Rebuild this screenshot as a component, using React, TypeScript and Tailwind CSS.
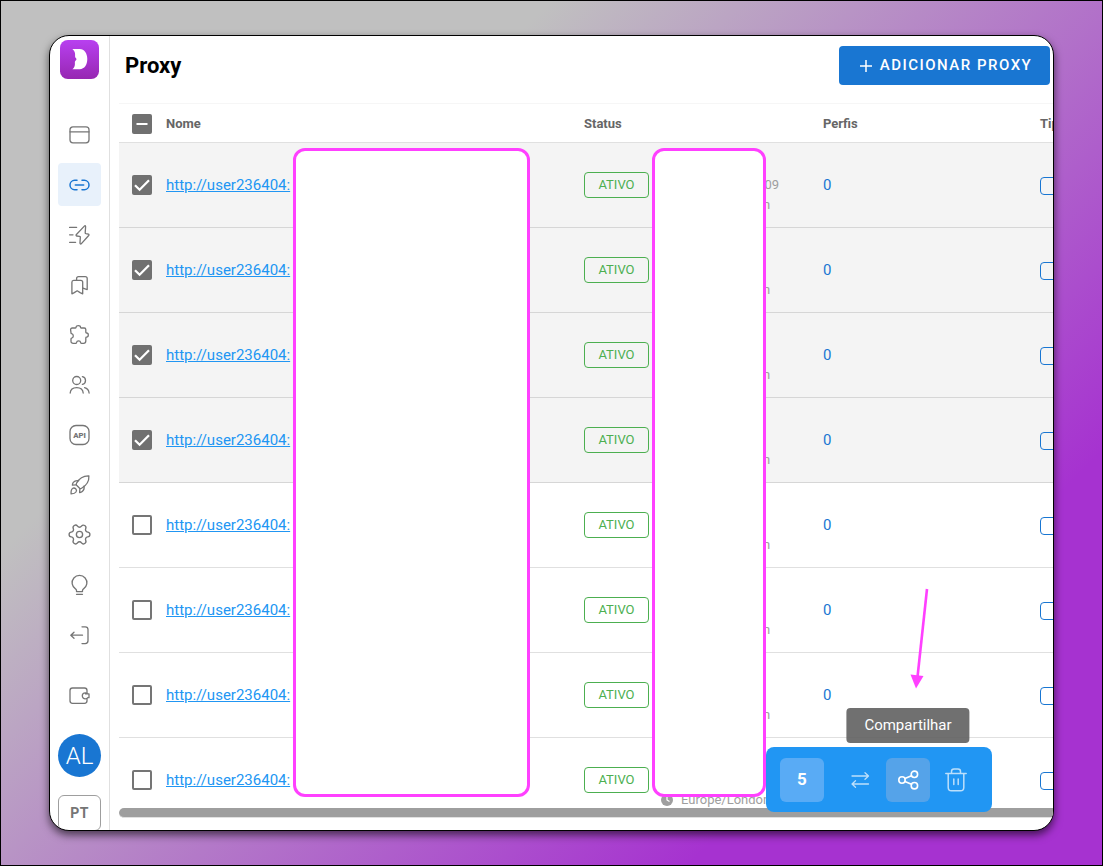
import type { ReactNode } from "react";
import { Settings } from "lucide-react";

function Icon({ children, className = "size-6" }: { children: ReactNode; className?: string }) {
  return (
    <svg
      viewBox="0 0 24 24"
      fill="none"
      stroke="currentColor"
      strokeWidth="1.3"
      strokeLinecap="round"
      strokeLinejoin="round"
      className={className}
      aria-hidden="true"
    >
      {children}
    </svg>
  );
}

const navItems: { label: string; icon: ReactNode; active?: boolean }[] = [
  {
    label: "Perfis",
    icon: (
      <Icon>
        <rect x="3" y="3.8" width="19" height="16" rx="3" />
        <path d="M3 8.8h19" />
      </Icon>
    ),
  },
  {
    label: "Proxy",
    active: true,
    icon: (
      <Icon>
        <path strokeWidth="1.5" d="M10 7.3H7.7a4.7 4.7 0 0 0 0 9.4H10M15 7.3h2.3a4.7 4.7 0 0 1 0 9.4H15M8.3 12h8.4" />
      </Icon>
    ),
  },
  {
    label: "Automação",
    icon: (
      <Icon>
        <path d="M2.6 4.4h7M2.6 11.8h3.4M2.6 19.3h6" />
        <path d="M17.6 2.9 9.4 11.5c-.6.7-.4 1.4.3 1.5l2.9.4c.5.1.8.5.7 1l-.3 5.6c0 1 .8 1.3 1.4.6l7.3-8.1c.5-.6.3-1.2-.4-1.4l-2.4-.4c-.5-.1-.8-.5-.7-1l.4-5.8c.1-1-.5-1.5-1-1Z" />
      </Icon>
    ),
  },
  {
    label: "Favoritos",
    icon: (
      <Icon>
        <path d="M6.6 7.4h7.2a1.9 1.9 0 0 1 1.9 1.9v11.5l-2.6-1.2-2.9-1.8-2.9 1.8-2.4 1.2V9.3c0-1 .7-1.9 1.7-1.9Z" />
        <path d="M9.6 7.2V5.6a2 2 0 0 1 2-2h6.6a2 2 0 0 1 2 2v11l-4.3-1.5" />
      </Icon>
    ),
  },
  {
    label: "Extensões",
    icon: (
      <Icon>
        <path d="M5.2 5h3.2c.4 0 .7-.3.7-.7 0-1 1-1.7 2.2-1.7s2.2.7 2.2 1.7c0 .4.3.7.7.7h3c.9 0 1.6.7 1.6 1.6v2.7c0 .5.4.7.8.7 1 0 1.7 1 1.7 2.1 0 1.2-.8 2.1-1.7 2.1-.5 0-.8.3-.8.7v3.2c0 1.5-.9 2.3-2.3 2.3h-2c-.5 0-.7-.3-.8-.8-.2-1-1-1.7-2.1-1.7s-1.9.7-2.1 1.7c-.1.5-.3.8-.8.8H6.2c-1.3 0-2.2-.8-2.2-2.2v-2.3c0-.4.2-.7.6-.8 1-.3 1.7-1.1 1.7-2.2S5.6 11 4.6 10.7C4.2 10.6 4 10.3 4 9.9L3.6 6.6C3.6 5.7 4.3 5 5.2 5Z" />
      </Icon>
    ),
  },
  {
    label: "Equipe",
    icon: (
      <Icon>
        <circle cx="9.7" cy="7.5" r="4" />
        <path d="M15.4 3.6a4 4 0 0 1 0 7.8M3.2 20c.2-3.3 2.8-5.4 6.5-5.4s6.3 2.1 6.5 5.4M17.6 14.7c2.6.7 4.2 2.6 4.5 5.3" />
      </Icon>
    ),
  },
  {
    label: "API",
    icon: (
      <Icon>
        <rect x="3" y="2.5" width="19" height="19" rx="6" />
        <text x="12.5" y="14.8" textAnchor="middle" fontSize="7.8" fontWeight="900" fill="currentColor" stroke="none">
          API
        </text>
      </Icon>
    ),
  },
  {
    label: "Início rápido",
    icon: (
      <Icon>
        <path d="M21.9 2.9c-5.4-.2-10 3-12.4 7.3-.5.9-.4 1.4.1 2l3 3c.6.6 1.2.6 2 .1 4.3-2.5 7.6-7 7.3-12.4Z" />
        <path d="M11.6 7.7c-2.3-.5-4 .1-5.3 1.7-.5.7-1 1.8-.9 2.8l3.8-.4M17 13.2c.5 2.4-.1 4.1-1.7 5.4-.7.6-1.7 1-2.7.9l.3-3.9" />
        <path d="M4.1 20.9c-.2-2.7.2-4.6 1.4-5.4 1-.7 2.2-.6 3.2.3.9.9 1 2.2.3 3.2-.9 1.3-2.4 1.8-4.9 1.9Z" />
      </Icon>
    ),
  },
  { label: "Configurações", icon: <Settings className="size-[25px] rotate-90" strokeWidth={1.3} aria-hidden="true" /> },
  {
    label: "Dicas",
    icon: (
      <Icon>
        <path d="M9.5 18.6v-1.1c0-.6-.3-1-.8-1.4a7.4 7.4 0 1 1 7.6 0c-.5.4-.8.8-.8 1.4v1.1ZM9.5 21.3h6" />
      </Icon>
    ),
  },
  {
    label: "Sair",
    icon: (
      <Icon>
        <path d="M3.8 12.2h11.7M7 9.2l-3.2 3 3.2 3M15 3.8h3.2c1.7 0 2.8 1.1 2.8 2.8v11.2c0 1.7-1.1 2.8-2.8 2.8H15" />
      </Icon>
    ),
  },
];

function Sidebar() {
  return (
    <aside className="flex w-[60px] shrink-0 flex-col items-start border-r border-[#e0e0e0] pt-1 pl-2 text-[#757575]">
      <svg viewBox="0 0 40 40" className="mx-0.5 size-[39px] shrink-0" role="img" aria-label="Logo">
        <defs>
          <linearGradient id="logo-fill" x1="0" y1="0" x2="0" y2="1">
            <stop offset="0" stopColor="#b840f0" />
            <stop offset="1" stopColor="#9727b2" />
          </linearGradient>
        </defs>
        <rect width="40" height="40" rx="8" fill="url(#logo-fill)" />
        <path
          fill="#fff"
          d="M12.7 9.2h7.5c5 0 7.8 4.6 7.8 10.4S25.2 30 20.2 30h-7.5c1.7-1.6 2.6-3.3 2.6-5.5 0-1.3-.2-1.9.2-2.6.5-.8 1.3-1.3 1.4-2.2.1-.9-.9-1.1-1.3-2-.3-.8-.1-1.6-.1-2.6 0-2.4-.9-4.3-2.8-5.9Z"
        />
      </svg>
      <nav className="mt-[34px] flex flex-col gap-[7px]">
        {navItems.map((item) => (
          <a
            key={item.label}
            href="#"
            aria-label={item.label}
            className={
              item.active
                ? "grid size-[43px] place-items-center rounded bg-[#e8f1fb] pr-px text-[#1976d2]"
                : "grid size-[43px] place-items-center rounded pr-px"
            }
          >
            {item.icon}
          </a>
        ))}
      </nav>
      <a href="#" aria-label="Carteira" className="mt-[17px] grid size-[43px] shrink-0 place-items-center pr-px">
        <Icon>
          <path d="M20 9.8V7.5C20 6 19 5 17.5 5h-12C4 5 3 6 3 7.5v10.3c0 1.5 1 2.5 2.5 2.5h12c1.5 0 2.5-1 2.5-2.5v-2.2" />
          <path d="M22 10.9h-3.400M18.300 9.800a3 3 0 1 0 0 6c1.200 0 2-.5 2.500-1.100H22v-3.800h-1.200c-.5-.6-1.300-1.100-2.500-1.100Z" />
        </Icon>
      </a>
      <button className="mt-[18px] size-[43px] shrink-0 rounded-full bg-[#1976d2] text-2xl font-light text-white">
        AL
      </button>
      <button className="mt-[18px] h-9 w-[43px] shrink-0 rounded-md border border-[#9e9e9e] text-sm font-bold tracking-wide">
        PT
      </button>
    </aside>
  );
}

function Checkbox({ state, label }: { state: "on" | "off" | "mixed"; label: string }) {
  return (
    <span className="grid size-5 place-items-center">
      <input
        type="checkbox"
        aria-label={label}
        defaultChecked={state === "on"}
        className={
          state === "off"
            ? "col-start-1 row-start-1 size-5 appearance-none rounded-xs border-2 border-[#757575]"
            : "col-start-1 row-start-1 size-5 appearance-none rounded-xs bg-[#707070]"
        }
      />
      {state !== "off" && (
        <svg
          viewBox="0 0 20 20"
          fill="none"
          stroke="#fff"
          strokeWidth="2.2"
          className="pointer-events-none col-start-1 row-start-1 size-5"
          aria-hidden="true"
        >
          {state === "on" ? <path d="M3 10.2 7.6 14.8 17 5.2" /> : <path d="M4.5 10h11" />}
        </svg>
      )}
    </span>
  );
}

const rows = [
  { selected: true, suffix: "09" },
  { selected: true, suffix: "" },
  { selected: true, suffix: "" },
  { selected: true, suffix: "" },
  { selected: false, suffix: "" },
  { selected: false, suffix: "" },
  { selected: false, suffix: "" },
  { selected: false, suffix: "" },
];

function ProxyTable() {
  return (
    <table className="w-full min-w-[1080px] table-fixed border-collapse text-left">
      <colgroup>
        <col className="w-[47px]" />
        <col className="w-[418px]" />
        <col className="w-[239px]" />
        <col className="w-[217px]" />
        <col />
      </colgroup>
      <thead className="text-[13px] text-[#666]">
        <tr className="h-[39px] border-y border-t-[#f6f6f6] border-b-[#e0e0e0]">
          <th className="pt-px pl-[13px]">
            <Checkbox state="mixed" label="Selecionar todos" />
          </th>
          <th className="pt-0.5 font-bold">Nome</th>
          <th className="pt-0.5 font-bold">Status</th>
          <th className="pt-0.5 font-bold">Perfis</th>
          <th className="pt-0.5 font-bold">Tipo</th>
        </tr>
      </thead>
      <tbody>
        {rows.map((row, i) => (
          <tr
            key={i}
            className={
              row.selected ? "h-[85px] border-b border-[#d6d6d6] bg-[#f4f4f4]" : "h-[85px] border-b border-[#e0e0e0]"
            }
          >
            <td className="pb-px pl-[13px]">
              <Checkbox state={row.selected ? "on" : "off"} label={`Selecionar linha ${i + 1}`} />
            </td>
            <td>
              <a href="#" className="text-[15px] text-[#2196f3] underline">
                http://user236404:
              </a>
            </td>
            <td>
              <div className="flex items-center gap-3">
                <span className="flex h-[26px] w-[65px] items-center justify-center rounded border border-[#4caf50] text-[13px] text-[#4caf50]">
                  ATIVO
                </span>
                <div className="grid w-[118px] grid-rows-[20px_20px_20px] items-center text-[13px] text-[#9e9e9e]">
                  <span className="row-start-2 text-right">{row.suffix}</span>
                  <span className="row-start-3 flex items-center gap-2">
                    <svg viewBox="0 0 12 12" className="size-3" aria-hidden="true">
                      <circle cx="6" cy="6" r="6" fill="currentColor" />
                      <path d="M6 2.5V6l2.5 1.5" fill="none" stroke="#fff" strokeWidth="1.2" />
                    </svg>
                    Europe/London
                  </span>
                </div>
              </div>
            </td>
            <td className="text-[15px] text-[#1976d2]">0</td>
            <td>
              <span className="mt-px block h-[18px] w-16 rounded border border-[#1976d2]" />
            </td>
          </tr>
        ))}
      </tbody>
    </table>
  );
}

function BulkActions() {
  return (
    <div className="absolute right-[61px] bottom-[18px] flex h-[65px] items-center gap-1 rounded-lg bg-[#2196f3] px-3.5 text-white">
      <span className="mr-2.5 grid size-11 place-items-center rounded-md bg-[#59abf5] text-[17px] font-bold">5</span>
      <button aria-label="Trocar" className="grid size-11 place-items-center text-[#bcdffb]">
        <Icon>
          <path d="M4 8h16.5M17 4.8 20.5 8 17 11.2M20.5 16H4M7.5 12.8 4 16l3.5 3.2" />
        </Icon>
      </button>
      <div className="relative">
        <button aria-label="Compartilhar" className="grid size-11 place-items-center rounded-md bg-[#55a3e9]">
          <Icon>
            <g strokeWidth="1.6">
              <circle cx="6" cy="12" r="3.2" />
              <circle cx="18.4" cy="6.3" r="3.2" />
              <circle cx="18.4" cy="17.7" r="3.2" />
              <path d="m8.9 10.6 6.600-2.900M8.900 13.400l6.600 2.900" />
            </g>
          </Icon>
        </button>
        <div
          role="tooltip"
          className="absolute bottom-full left-1/2 mb-[15px] -translate-x-1/2 rounded bg-[#616161]/90 px-[18px] py-[5px] text-[15px] leading-[25px]"
        >
          Compartilhar
        </div>
        <svg
          viewBox="0 0 24 104"
          className="absolute bottom-full left-1/2 mb-[69px] h-[104px] w-6 text-[#ff40ff]"
          aria-hidden="true"
        >
          <path d="M19 4 9.500 92" stroke="currentColor" strokeWidth="2.6" fill="none" />
          <path d="M2.500 89.500 15.500 91 8 103.500Z" fill="currentColor" />
        </svg>
      </div>
      <button aria-label="Excluir" className="grid size-11 place-items-center text-[#bcdffb]">
        <Icon>
          <g strokeWidth="1.5">
            <path d="M1.8 5.5h20.4M4.2 5.5v14c0 2 1.3 3.3 3.3 3.3h9c2 0 3.3-1.3 3.3-3.3v-14M7.5 5.3V3.500c0-1.600.9-2.500 2.500-2.500h4c1.600 0 2.500.9 2.500 2.500v1.800M9.800 11v5.500M14.200 11v5.500" />
          </g>
        </Icon>
      </button>
    </div>
  );
}

export default function App() {
  return (
    <div className="h-screen border border-black bg-[linear-gradient(135deg,#c0c0c0_28%,#a632d0_79%)] px-12 py-[34px] font-['Roboto',sans-serif]">
      <div className="relative flex h-full overflow-hidden rounded-[20px] border border-black bg-white shadow-[0_4px_8px_rgba(0,0,0,0.6)]">
        <Sidebar />
        <main className="flex min-w-0 flex-1 flex-col">
          <header className="flex h-[67px] shrink-0 items-start justify-between pt-2.5 pr-[3px] pl-[15px]">
            <h1 className="text-[22px] leading-[39px] font-bold text-black">Proxy</h1>
            <button className="flex h-[39px] w-[211px] items-center justify-center gap-2 rounded bg-[#1976d2] pl-[3px] text-[15px] font-medium tracking-widest text-white">
              <svg viewBox="0 0 12 12" className="size-3" stroke="currentColor" strokeWidth="1.5" aria-hidden="true">
                <path d="M6 0v12M0 6h12" />
              </svg>
              ADICIONAR PROXY
            </button>
          </header>
          <div className="ml-[9px] min-h-0 flex-1 overflow-hidden">
            <ProxyTable />
          </div>
          <div className="mb-3 ml-[9px] h-2.5 shrink-0 rounded-l-full border-b border-[#e0e0e0] bg-[#9e9e9e]" />
        </main>
        <div className="absolute top-28 left-[243px] h-[649px] w-[237px] rounded-xl border-3 border-[#ff40ff] bg-white" />
        <div className="absolute top-28 left-[602px] h-[649px] w-[114px] rounded-xl border-3 border-[#ff40ff] bg-white" />
        <BulkActions />
      </div>
    </div>
  );
}
